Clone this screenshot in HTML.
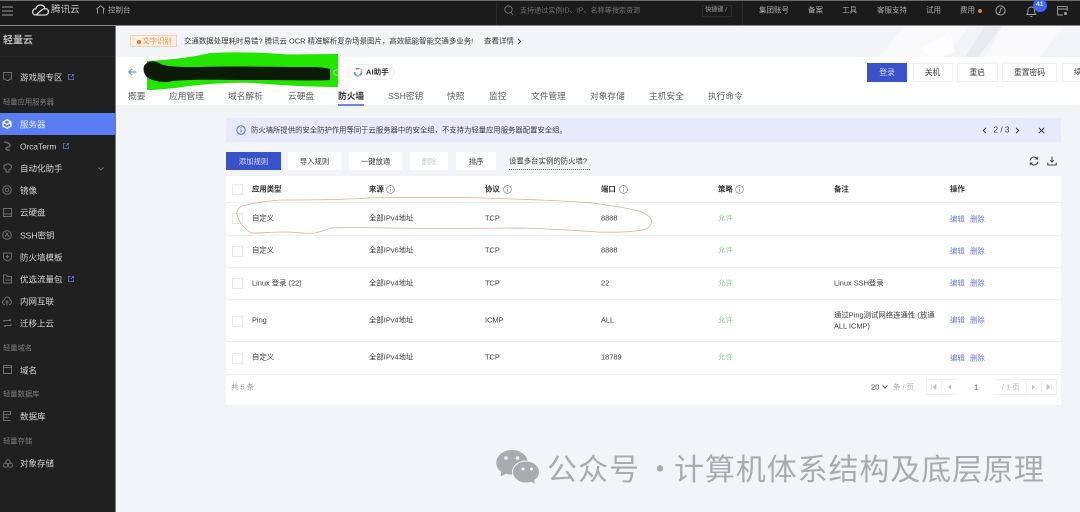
<!DOCTYPE html>
<html lang="zh-CN"><head><meta charset="utf-8"><title>轻量云 防火墙</title>
<style>
*{box-sizing:border-box;margin:0;padding:0}
html,body{width:1080px;height:512px;overflow:hidden;background:#f3f4f8}
body{font-family:"Liberation Sans","Noto Sans CJK SC",sans-serif;position:relative}
#w{position:absolute;left:0;top:0;width:1080px;height:512px;overflow:hidden;filter:blur(.35px)}
.a{position:absolute}
.t{position:absolute;white-space:nowrap;line-height:20px;height:20px;font-size:7.4px;color:#3c3c3c;transform:translateY(.6px)}
.n{color:#d0d2d6;font-size:8.5px}
.sec{color:#7c7c7c;font-size:7.3px;left:3px}
.top{color:#adadad;font-size:7.5px}
.tab{color:#5f5f5f;font-size:8.7px;transform:none}
.b{position:absolute;background:#fff;text-align:center;font-size:7.4px;color:#3c3c3c;display:flex;align-items:center;justify-content:center}
.l{position:absolute;left:226px;width:835px;height:1px;background:#f0f1f4}
.cb{position:absolute;left:232px;width:11px;height:11px;border:1px solid #e9eaed;background:#fff}
.g{color:#8ccb8c}.e{color:#6b79d8}
.h{color:#333;font-weight:bold}
svg{position:absolute;overflow:visible}
</style></head><body><div id="w">

<!-- top bar -->
<div class="a" style="left:0;top:0;width:1080px;height:26px;background:#1b1b1b;border-top:1px solid #6b6b6b;border-bottom:1px solid #8a8a8a"></div>
<svg style="left:2px;top:6px" width="12" height="10"><path d="M0 1h11M0 5h11M0 9h11" stroke="#9a9a9a" stroke-width="1"/></svg>
<svg style="left:32px;top:4px" width="17" height="12" viewBox="0 0 17 12"><path d="M4 11C1.500 11 .6 9.200 .6 7.900 .6 6 2.200 4.700 3.800 4.800 4.500 2.400 6.400 1 8.500 1c2.400 0 4 1.500 4.500 3.500 2 0 3.500 1.500 3.500 3.300S15 11 13 11H4zM4 11l6-5.200C11 5 12 4.600 13 4.600" fill="none" stroke="#d8d8d8" stroke-width="1.300"/></svg>
<div class="t" style="left:51px;top:0;font-size:9.600px;color:#c8c8c8">腾讯云</div>
<svg style="left:96px;top:5px" width="9" height="9" viewBox="0 0 9 9"><path d="M.5 4 4.500.7 8.500 4M1.500 3.500V8.500M7.500 3.500V8.500" fill="none" stroke="#a8a8a8" stroke-width=".9"/></svg>
<div class="t top" style="left:108px;top:0">控制台</div>
<div class="a" style="left:496px;top:1px;width:1px;height:24px;background:#2b2b2b"></div>
<svg style="left:504px;top:5px" width="10" height="11"><circle cx="4.500" cy="4.500" r="3.700" fill="none" stroke="#777" stroke-width=".9"/><path d="M7 7.300 9 10" stroke="#777" stroke-width=".9"/></svg>
<div class="t" style="left:520px;top:0;color:#727272;font-size:7.100px">支持通过实例ID、IP、名称等搜索资源</div>
<div class="a" style="left:702px;top:5px;width:30px;height:12px;border:1px solid #2c2c2c"></div>
<div class="t" style="left:705px;top:0;color:#a0a0a0;font-size:6.200px">快捷键 /</div>
<div class="a" style="left:742px;top:1px;width:1px;height:24px;background:#2b2b2b"></div>
<div class="t top" style="left:759px;top:0">集团账号</div>
<div class="t top" style="left:808px;top:0">备案</div>
<div class="t top" style="left:842px;top:0">工具</div>
<div class="t top" style="left:877px;top:0">客服支持</div>
<div class="t top" style="left:926px;top:0">试用</div>
<div class="t top" style="left:960px;top:0">费用</div>
<div class="a" style="left:978px;top:8.500px;width:4px;height:4px;border-radius:50%;background:#d9803c"></div>
<svg style="left:995px;top:5px" width="11" height="11"><circle cx="5.500" cy="5.500" r="4.600" fill="none" stroke="#a0a0a0"/><path d="M3.500 8c2 0 1.500-2 2-3.500S6.800 3 7.500 3" fill="none" stroke="#a0a0a0"/></svg>
<svg style="left:1026px;top:5px" width="11" height="13" viewBox="0 0 11 13"><path d="M1 9.500c1-1 1-2 1-4C2 3.300 3.500 2 5.300 2s3.300 1.300 3.300 3.500c0 2 0 3 1 4zM4.300 11.500h2" fill="none" stroke="#a8a8a8" stroke-width=".9"/></svg>
<div class="a" style="left:1033px;top:-1px;width:13.500px;height:13px;border-radius:50%;background:#4466ee;color:#e6eaff;font-size:6.800px;font-weight:bold;text-align:center;line-height:12px">41</div>
<svg style="left:1057px;top:6px" width="11" height="10"><path d="M6 9H.6V.6h9.600V5M.6 3h9.600" fill="none" stroke="#a0a0a0" stroke-width=".9"/><circle cx="8.500" cy="7.500" r="1.500" fill="#a0a0a0"/></svg>

<!-- sidebar -->
<div class="a" style="left:0;top:26px;width:116px;height:486px;background:#202020;border-right:1px solid #7a7a7a"></div>
<div class="t" style="left:3px;top:31px;font-size:10px;font-weight:bold;color:#b9b9b9">轻量云</div>
<div class="a" style="left:0;top:56px;width:115px;height:1px;background:#2a2a2a"></div>

<svg style="left:3px;top:72px" width="9" height="10"><path d="M.5.500h8v6.500H6.500L5.500 8.500h-2L2.500 7h-2zM2.500 3h1M5.500 3h1" fill="none" stroke="#6e6e6e"/></svg>
<div class="t n" style="left:20px;top:67px">游戏服专区</div>
<svg style="left:68px;top:74px" width="6" height="6"><path d="M2.500.5H.5v5h5V3.500M3 3 5.500.5M3.800.5h1.700v1.700" fill="none" stroke="#5f7fd8" stroke-width=".8"/></svg>
<div class="t sec" style="top:92px">轻量应用服务器</div>
<div class="a" style="left:0;top:113px;width:115px;height:22px;background:#5a7df2"></div>
<svg style="left:2px;top:119px" width="10" height="10"><path d="M5 .7 9 3v4L5 9.300 1 7V3zM1.500 3.500 5 5.500l3.500-2" fill="none" stroke="#fff" stroke-width="1.300"/></svg>
<div class="t n" style="left:20px;top:114px;color:#e4e9fd">服务器</div>
<svg style="left:3px;top:141px" width="9" height="10"><path d="M1 1c3 0 6 1.500 6 3.500S3 6 3 7.500 5 9.500 7 9" fill="none" stroke="#6e6e6e" stroke-width="1.300"/></svg>
<div class="t n" style="left:20px;top:136px;font-size:8.300px">OrcaTerm</div>
<svg style="left:63px;top:143px" width="6" height="6"><path d="M2.500.5H.5v5h5V3.500M3 3 5.500.5M3.800.5h1.700v1.700" fill="none" stroke="#5f7fd8" stroke-width=".8"/></svg>
<svg style="left:3px;top:163px" width="9" height="10"><path d="M1 2.500 5 .7l3.500 2L8 6 6 6.500V9H3V6.500L1 5.500z" fill="none" stroke="#6e6e6e" stroke-width="1.100"/></svg>
<div class="t n" style="left:20px;top:158px">自动化助手</div>
<svg style="left:98px;top:167px" width="6" height="4"><path d="M.5.500 3 3 5.500.5" fill="none" stroke="#707070" stroke-width=".9"/></svg>
<svg style="left:2px;top:185px" width="10" height="10"><circle cx="5" cy="5" r="4.300" fill="none" stroke="#6e6e6e"/><circle cx="5" cy="5" r="1.800" fill="none" stroke="#6e6e6e"/></svg>
<div class="t n" style="left:20px;top:180px">镜像</div>
<svg style="left:3px;top:208px" width="9" height="9"><path d="M.5.500h8v8h-8zM.5 6h8" fill="none" stroke="#6e6e6e"/></svg>
<div class="t n" style="left:20px;top:202px">云硬盘</div>
<svg style="left:2px;top:230px" width="10" height="10"><circle cx="5" cy="5" r="4.300" fill="none" stroke="#6e6e6e"/><path d="M3.300 7 5 3l1.700 4" fill="none" stroke="#6e6e6e"/></svg>
<div class="t n" style="left:20px;top:225px">SSH密钥</div>
<svg style="left:3px;top:252px" width="9" height="10"><path d="M.5 1h8v4c0 2-2 3.300-4 4-2-.7-4-2-4-4zM2.800 4.500h3.400M4.500 2.800v3.400" fill="none" stroke="#6e6e6e"/></svg>
<div class="t n" style="left:20px;top:247px">防火墙模板</div>
<svg style="left:3px;top:274px" width="9" height="10"><path d="M.5 1h3l1 1.500h4V9h-8zM3 7V5.500M5 7V4.500M7 7V5" fill="none" stroke="#6e6e6e"/></svg>
<div class="t n" style="left:20px;top:269px">优选流量包</div>
<svg style="left:68px;top:276px" width="6" height="6"><path d="M2.500.5H.5v5h5V3.500M3 3 5.500.5M3.800.5h1.700v1.700" fill="none" stroke="#5f7fd8" stroke-width=".8"/></svg>
<svg style="left:2px;top:296px" width="10" height="10"><path d="M3 8.500C1.500 8.500.6 7.400.6 6.200S1.500 4 2.500 4C3 2 4 1 5.300 1 7 1 8 2.500 8 4c1 .3 1.500 1.200 1.500 2.200S8.500 8.500 7 8.500M5 9.500V5M3.500 6.500 5 5l1.500 1.500" fill="none" stroke="#6e6e6e"/></svg>
<div class="t n" style="left:20px;top:291px">内网互联</div>
<svg style="left:3px;top:319px" width="9" height="8"><path d="M1 3V1.500h7M6.500 0 8 1.500M8 5v1.500H1M2.500 8 1 6.500" fill="none" stroke="#6e6e6e"/></svg>
<div class="t n" style="left:20px;top:313px">迁移上云</div>
<div class="t sec" style="top:338px">轻量域名</div>
<svg style="left:3px;top:365px" width="9" height="9"><path d="M.5.500h8v8h-8zM.5 2.500h8" fill="none" stroke="#6e6e6e"/></svg>
<div class="t n" style="left:20px;top:360px">域名</div>
<div class="t sec" style="top:384px">轻量数据库</div>
<svg style="left:3px;top:411px" width="9" height="10"><path d="M.5.500h7v3h-7zM.5 3.500h7M.5 3.500v3h5M.5 6.500v3h7" fill="none" stroke="#6e6e6e"/></svg>
<div class="t n" style="left:20px;top:406px">数据库</div>
<div class="t sec" style="top:431px">轻量存储</div>
<svg style="left:3px;top:459px" width="10" height="9"><circle cx="5" cy="2.800" r="2.100" fill="none" stroke="#6e6e6e"/><circle cx="2.700" cy="6.200" r="2.100" fill="none" stroke="#6e6e6e"/><circle cx="7.300" cy="6.200" r="2.100" fill="none" stroke="#6e6e6e"/></svg>
<div class="t n" style="left:20px;top:453px">对象存储</div>

<!-- banner -->
<svg style="left:860px;top:26px" width="220" height="31"><path d="M18 31 45 0H110L85 31z" fill="#fbfbfc" opacity=".7"/><path d="M60 22 82 12 90 4 95 26 76 31H72z" fill="#fdfdfe"/><path d="M105 31 125 0H142L118 31z" fill="#e9eaed"/><path d="M125 31 143 0H205L180 31z" fill="#fafafb" opacity=".8"/></svg>
<div class="a" style="left:130px;top:35px;width:47px;height:12px;background:#fdeee0;border:1px solid #f3d3b4"></div>
<div class="a" style="left:136.500px;top:39.500px;width:4px;height:4.500px;border-radius:50%;background:#e0772c"></div>
<div class="t" style="left:142.500px;top:31px;color:#e4944c;font-size:7.300px">文字识别</div>
<div class="t" style="left:184px;top:31px;font-size:7.450px">交通数据处理耗时易错? 腾讯云 OCR 精准解析复杂场景图片，高效赋能智能交通多业务!</div>
<div class="t" style="left:484px;top:31px;font-size:7.500px">查看详情</div>
<svg style="left:517px;top:38px" width="5" height="7"><path d="M1 .8 3.500 3.500 1 6.200" fill="none" stroke="#333"/></svg>

<!-- header -->
<div class="a" style="left:116px;top:57px;width:964px;height:48px;background:#fff"></div>
<svg style="left:128px;top:68px" width="9" height="8"><path d="M8.500 4H1M4 .8 .8 4 4 7.200" fill="none" stroke="#5a78e8" stroke-width="1"/></svg>
<svg style="left:0;top:0" width="1080" height="512"><path d="M147 61C165 60 190 58 210 53C232 52 255 52 280 54C298 55 312 54 338 54V87C320 87 290 86 253 83C225 82 195 85 175 88C165 89 155 90 147 90Z" fill="#22e600"/><path d="M144 66C147 61 154 60 159 63C165 67 180 67 200 67C230 66 270 67 300 67C312 67 324 67 330 69V80C310 81 280 80 250 80C220 80 195 79 172 81C168 83 158 82 153 80C147 79 142 73 144 66Z" fill="#0c1a08"/></svg>
<svg style="left:333px;top:69px" width="7" height="7"><circle cx="3.500" cy="3.500" r="2.800" fill="none" stroke="#d8dbd2" stroke-width=".8"/></svg>
<div class="a" style="left:348px;top:64px;width:47px;height:16px;border:1px solid #eeeff2;border-radius:8px;background:#fff"></div>
<svg style="left:353px;top:67px" width="10" height="10"><circle cx="5" cy="5" r="3.500" fill="none" stroke="#6f7fe8" stroke-width="1.600" stroke-dasharray="4 3"/><path d="M7.500 1.800A4 4 0 0 1 8.700 6" fill="none" stroke="#e9a07a" stroke-width="1.300"/><path d="M2 7.800A4 4 0 0 0 6 8.800" fill="none" stroke="#58c0c8" stroke-width="1.300"/></svg>
<div class="t" style="left:366px;top:62px;font-size:7.600px;font-weight:bold;color:#333">AI助手</div>

<div class="b" style="left:867px;top:63px;width:40px;height:18.500px;background:#3a52c8;color:#d5dcf7;font-size:7.800px">登录</div>
<div class="b" style="left:912.500px;top:63px;width:40px;height:18.500px;border:1px solid #eeeff2;font-size:7.800px">关机</div>
<div class="b" style="left:957px;top:63px;width:40.500px;height:18.500px;border:1px solid #eeeff2;font-size:7.800px">重启</div>
<div class="b" style="left:1002px;top:63px;width:55px;height:18.500px;border:1px solid #eeeff2;font-size:7.800px">重置密码</div>
<div class="a" style="left:1062px;top:63px;width:19px;height:18.500px;border:1px solid #eeeff2"></div>
<div class="t" style="left:1074px;top:62px;font-size:7.800px">续</div>

<div class="t tab" style="left:128px;top:86px">概要</div>
<div class="t tab" style="left:169px;top:86px">应用管理</div>
<div class="t tab" style="left:228px;top:86px">域名解析</div>
<div class="t tab" style="left:288px;top:86px">云硬盘</div>
<div class="t tab" style="left:338px;top:86px;color:#333;font-weight:bold">防火墙</div>
<div class="a" style="left:338px;top:103.500px;width:26px;height:2px;background:#6f84e6"></div>
<div class="t tab" style="left:388px;top:86px">SSH密钥</div>
<div class="t tab" style="left:447px;top:86px">快照</div>
<div class="t tab" style="left:489px;top:86px">监控</div>
<div class="t tab" style="left:531px;top:86px">文件管理</div>
<div class="t tab" style="left:590px;top:86px">对象存储</div>
<div class="t tab" style="left:649px;top:86px">主机安全</div>
<div class="t tab" style="left:708px;top:86px">执行命令</div>

<!-- alert -->
<div class="a" style="left:226px;top:118px;width:835px;height:24px;background:#e6eafa"></div>
<svg style="left:236px;top:125px" width="10" height="10"><circle cx="5" cy="5" r="4.200" fill="none" stroke="#5a72d8" stroke-width="1"/><path d="M5 4.200V7.500M5 2.400V3.400" stroke="#5a72d8" stroke-width="1"/></svg>
<div class="t" style="left:251px;top:120px;font-size:7.350px">防火墙所提供的安全防护作用等同于云服务器中的安全组，不支持为轻量应用服务器配置安全组。</div>
<svg style="left:982px;top:127px" width="5" height="7"><path d="M4 .8 1.300 3.500 4 6.200" fill="none" stroke="#333"/></svg>
<div class="t" style="left:993.500px;top:120px;font-size:8.200px">2 / 3</div>
<svg style="left:1015px;top:127px" width="5" height="7"><path d="M1 .8 3.700 3.500 1 6.200" fill="none" stroke="#333"/></svg>
<svg style="left:1038px;top:126.500px" width="7" height="7"><path d="M.8.800 6.200 6.200M6.200.8.800 6.200" stroke="#333" stroke-width="1"/></svg>

<!-- toolbar -->
<div class="b" style="left:226px;top:152px;width:55px;height:18px;background:#3a52c8;color:#d5dcf7">添加规则</div>
<div class="b" style="left:288px;top:152px;width:53px;height:18px">导入规则</div>
<div class="b" style="left:349px;top:152px;width:53px;height:18px">一键放通</div>
<div class="b" style="left:410px;top:152px;width:38px;height:18px;color:#c8c9cc">删除</div>
<div class="b" style="left:456px;top:152px;width:40px;height:18px">排序</div>
<div class="t" style="left:509px;top:151px;font-size:7.400px">设置多台实例的防火墙?</div>
<div class="a" style="left:509px;top:169px;width:81px;height:0;border-top:1px dotted #777"></div>
<svg style="left:1029px;top:156px" width="10" height="10"><path d="M1 4.500C1.500 2.500 3 1 5 1c1.500 0 2.500.7 3.200 1.700M9 5.500C8.500 7.500 7 9 5 9 3.500 9 2.500 8.300 1.800 7.300" fill="none" stroke="#444" stroke-width="1"/><path d="M8.800.6V3H6.400M1.200 9.400V7H3.600" fill="none" stroke="#444" stroke-width=".9"/></svg>
<svg style="left:1047px;top:156px" width="10" height="10"><path d="M5 .5V6M3 4.200 5 6.200l2-2M.8 6.500V9h8.400V6.500" fill="none" stroke="#444" stroke-width="1"/></svg>

<!-- table -->
<div class="a" style="left:226px;top:176px;width:835px;height:229px;background:#fff"></div>
<div class="l" style="top:202px"></div><div class="l" style="top:235px"></div><div class="l" style="top:267px"></div><div class="l" style="top:299px"></div><div class="l" style="top:341px"></div><div class="l" style="top:374px"></div>
<div class="cb" style="top:184px"></div><div class="cb" style="top:213px"></div><div class="cb" style="top:246px"></div><div class="cb" style="top:278px"></div><div class="cb" style="top:316px"></div><div class="cb" style="top:353px"></div>

<div class="t h" style="left:252px;top:179px">应用类型</div>
<div class="t h" style="left:369px;top:179px">来源</div>
<div class="t h" style="left:485px;top:179px">协议</div>
<div class="t h" style="left:601px;top:179px">端口</div>
<div class="t h" style="left:718px;top:179px">策略</div>
<div class="t h" style="left:834px;top:179px">备注</div>
<div class="t h" style="left:950px;top:179px">操作</div>
<svg style="left:386px;top:184.500px" width="9" height="9"><circle cx="4.500" cy="4.500" r="3.900" fill="none" stroke="#888" stroke-width=".7"/><path d="M4.500 3.800V6.800M4.500 2.100V3" stroke="#888" stroke-width=".7"/></svg>
<svg style="left:503px;top:184.500px" width="9" height="9"><circle cx="4.500" cy="4.500" r="3.900" fill="none" stroke="#888" stroke-width=".7"/><path d="M4.500 3.800V6.800M4.500 2.100V3" stroke="#888" stroke-width=".7"/></svg>
<svg style="left:619px;top:184.500px" width="9" height="9"><circle cx="4.500" cy="4.500" r="3.900" fill="none" stroke="#888" stroke-width=".7"/><path d="M4.500 3.800V6.800M4.500 2.100V3" stroke="#888" stroke-width=".7"/></svg>
<svg style="left:735px;top:184.500px" width="9" height="9"><circle cx="4.500" cy="4.500" r="3.900" fill="none" stroke="#888" stroke-width=".7"/><path d="M4.500 3.800V6.800M4.500 2.100V3" stroke="#888" stroke-width=".7"/></svg>

<div class="t" style="left:252px;top:208px">自定义</div><div class="t" style="left:369px;top:208px">全部IPv4地址</div><div class="t" style="left:485px;top:208px">TCP</div><div class="t" style="left:601px;top:208px">8888</div><div class="t g" style="left:718px;top:208px">允许</div><div class="t e" style="left:950px;top:208.500px">编辑</div><div class="t e" style="left:970px;top:208.500px">删除</div>

<div class="t" style="left:252px;top:240px">自定义</div><div class="t" style="left:369px;top:240px">全部IPv6地址</div><div class="t" style="left:485px;top:240px">TCP</div><div class="t" style="left:601px;top:240px">8888</div><div class="t g" style="left:718px;top:240px">允许</div><div class="t e" style="left:950px;top:240.500px">编辑</div><div class="t e" style="left:970px;top:240.500px">删除</div>

<div class="t" style="left:252px;top:273px">Linux 登录 (22)</div><div class="t" style="left:369px;top:273px">全部IPv4地址</div><div class="t" style="left:485px;top:273px">TCP</div><div class="t" style="left:601px;top:273px">22</div><div class="t g" style="left:718px;top:273px">允许</div><div class="t" style="left:834px;top:273px">Linux SSH登录</div><div class="t e" style="left:950px;top:273px">编辑</div><div class="t e" style="left:970px;top:273px">删除</div>

<div class="t" style="left:252px;top:310px">Ping</div><div class="t" style="left:369px;top:310px">全部IPv4地址</div><div class="t" style="left:485px;top:310px">ICMP</div><div class="t" style="left:601px;top:310px">ALL</div><div class="t g" style="left:718px;top:310px">允许</div><div class="t" style="left:834px;top:305px">通过Ping测试网络连通性 (放通</div><div class="t" style="left:834px;top:316px">ALL ICMP)</div><div class="t e" style="left:950px;top:310px">编辑</div><div class="t e" style="left:970px;top:310px">删除</div>

<div class="t" style="left:252px;top:347px">自定义</div><div class="t" style="left:369px;top:347px">全部IPv4地址</div><div class="t" style="left:485px;top:347px">TCP</div><div class="t" style="left:601px;top:347px">18789</div><div class="t g" style="left:718px;top:347px">允许</div><div class="t e" style="left:950px;top:347.500px">编辑</div><div class="t e" style="left:970px;top:347.500px">删除</div>

<div class="t" style="left:231px;top:377px;color:#999">共 5 条</div>
<div class="t" style="left:871px;top:377px">20</div>
<svg style="left:882px;top:385px" width="6" height="4"><path d="M.5.500 3 3 5.500.5" fill="none" stroke="#444" stroke-width=".9"/></svg>
<div class="t" style="left:893px;top:377px;color:#aaa">条 / 页</div>
<div class="a" style="left:926px;top:379px;width:131px;height:16px;border:1px solid #f0f1f4"></div>
<div class="a" style="left:941px;top:379px;width:1px;height:16px;background:#f0f1f4"></div>
<div class="a" style="left:956px;top:379px;width:39px;height:16px;background:#fff"></div>
<div class="a" style="left:1026px;top:379px;width:1px;height:16px;background:#f0f1f4"></div>
<div class="a" style="left:1041px;top:379px;width:1px;height:16px;background:#f0f1f4"></div>
<div class="t" style="left:974px;top:377px;color:#333">1</div>
<div class="t" style="left:1002px;top:377px;color:#b5b5b5">/ 1 页</div>
<svg style="left:931px;top:384px" width="6" height="6"><path d="M.8.500V5.500M5 .5 2 3l3 2.500z" fill="#c0c0c0" stroke="#c0c0c0" stroke-width=".6"/></svg>
<svg style="left:947px;top:384px" width="5" height="6"><path d="M4 .5 1 3l3 2.500z" fill="#c0c0c0"/></svg>
<svg style="left:1031px;top:384px" width="5" height="6"><path d="M1 .5 4 3 1 5.500z" fill="#c0c0c0"/></svg>
<svg style="left:1046px;top:384px" width="6" height="6"><path d="M5.200.5V5.500M1 .5 4 3 1 5.500z" fill="#c0c0c0" stroke="#c0c0c0" stroke-width=".6"/></svg>

<!-- hand-drawn annotation -->
<svg style="left:0;top:0" width="1080" height="512"><path d="M237 215C236 209 240 206 247 205C258 202 268 201 280 200C310 200 340 200 368 198C420 197 470 197 512 199C545 200 570 201 592 203C615 206 632 209 642 212C650 216 653 220 651 224C649 229 644 230 636 231C620 233 610 232 598 232C570 230 550 229 525 228C480 228 435 229 392 228C370 228 350 227 332 228C325 230 320 232 315 233C305 234 295 232 285 232C272 232 262 233 252 233C246 230 241 226 237 215Z" fill="none" stroke="#dcae96" stroke-width=".8"/></svg>

<!-- watermark -->
<svg style="left:496px;top:449px" width="46" height="36" viewBox="0 0 46 36"><path d="M16 1C7.500 1 .3 6.500 .3 14c0 3.800 1.900 6.800 5 9L4.500 27.500l5.300-2.800c1.900.6 3.800.9 6.200.9 9 0 16-5.500 16-12S25 1 16 1z" fill="#a9abae"/><ellipse cx="30" cy="23" rx="14" ry="11.500" fill="#f3f4f8"/><ellipse cx="30" cy="23" rx="13" ry="10.500" fill="#a9abae"/><path d="M34 32 38.500 35 38 29z" fill="#a9abae"/><circle cx="10" cy="9" r="1.800" fill="#f3f4f8"/><circle cx="21.500" cy="9" r="1.800" fill="#f3f4f8"/><circle cx="27" cy="20" r="1.500" fill="#f3f4f8"/><circle cx="35.500" cy="20" r="1.500" fill="#f3f4f8"/></svg>
<div class="a" style="left:547px;top:447px;height:40px;line-height:40px;white-space:nowrap;font-size:30px;letter-spacing:1px;color:#a9abae;font-family:'Noto Sans CJK SC',sans-serif">公众号</div>
<div class="a" style="left:645px;top:447px;height:40px;line-height:40px;font-size:30px;color:#a9abae;font-family:'Noto Sans CJK SC',sans-serif;width:20px;text-align:center">·</div>
<div class="a" style="left:674px;top:447px;height:40px;line-height:40px;white-space:nowrap;font-size:30px;letter-spacing:.9px;color:#a9abae;font-family:'Noto Sans CJK SC',sans-serif">计算机体系结构及底层原理</div>
</div></body></html>
